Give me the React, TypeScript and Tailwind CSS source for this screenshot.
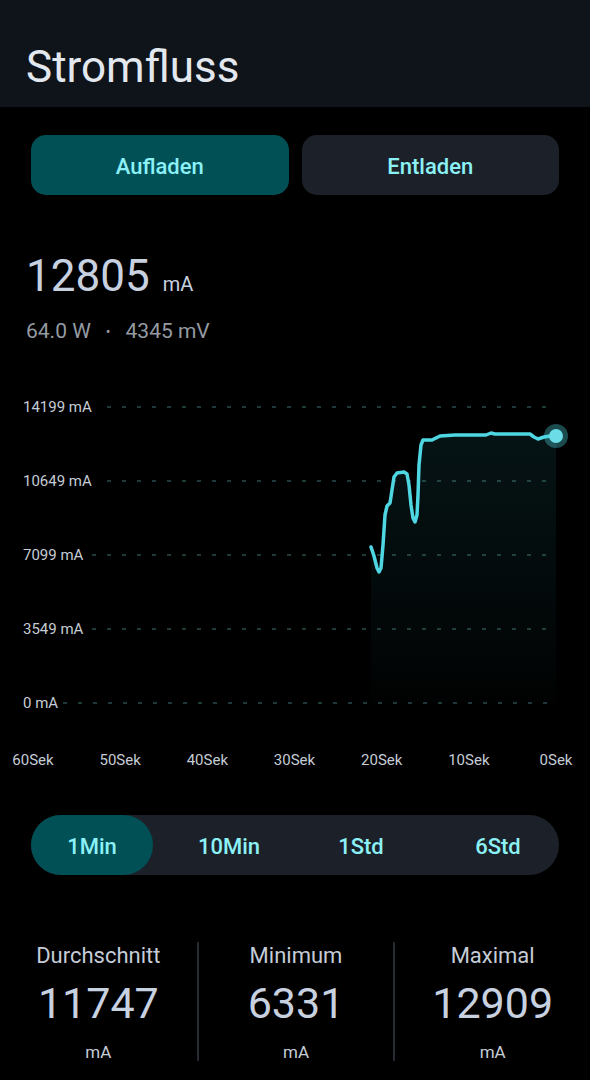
import React from "react";

const font = { fontFamily: "Roboto, 'Noto Sans', sans-serif" };

const yTicks = [
  { label: "14199 mA", y: 407, x0: 107 },
  { label: "10649 mA", y: 481, x0: 107 },
  { label: "7099 mA", y: 555, x0: 92 },
  { label: "3549 mA", y: 629, x0: 92 },
  { label: "0 mA", y: 703, x0: 63 },
];

const xTicks = ["60Sek", "50Sek", "40Sek", "30Sek", "20Sek", "10Sek", "0Sek"];

// samples of the last ~21 seconds, in page coordinates
const points: [number, number][] = [
  [371, 547], [374, 556], [377, 568], [379, 572], [381, 568], [383, 545], [385, 515],
  [387, 506], [390, 503], [392, 490], [394, 477], [397, 473], [404, 472], [407, 474],
  [409, 485], [411, 505], [413, 518], [415, 522], [417, 515], [418, 495], [419, 465],
  [421, 445], [423, 440], [432, 440], [436, 438], [440, 436], [455, 435], [486, 435],
  [491, 433], [495, 434], [530, 434], [534, 437], [538, 439], [544, 437], [550, 436],
  [556, 436],
];

function Chart() {
  const line = points.map((p) => p.join(",")).join(" ");
  const area = `M371,703 L${points.map((p) => p.join(",")).join(" L")} L556,703 Z`;
  return (
    <svg className="block" width={590} height={400} viewBox="0 380 590 400">
      <defs>
        <linearGradient id="fill" x1="0" y1="0" x2="0" y2="1">
          <stop offset="0%" stopColor="#3cc8d7" stopOpacity={0.1} />
          <stop offset="100%" stopColor="#3cc8d7" stopOpacity={0.01} />
        </linearGradient>
      </defs>
      {yTicks.map((t) => (
        <g key={t.label}>
          <text x={23} y={t.y + 5} fontSize={15} fill="#c5ccd6" style={font}>
            {t.label}
          </text>
          <line x1={t.x0} y1={t.y} x2={548} y2={t.y} stroke="#1f3839" strokeWidth={2} strokeDasharray="4 11" />
        </g>
      ))}
      <path d={area} fill="url(#fill)" />
      <polyline points={line} fill="none" stroke="#4fd6e3" strokeWidth={3.5} strokeLinejoin="round" strokeLinecap="round" />
      <circle cx={556} cy={436} r={12} fill="#4fd6e3" opacity={0.35} />
      <circle cx={556} cy={436} r={7} fill="#6cdde6" />
      {xTicks.map((l, i) => (
        <text key={l} x={33 + i * 87.17} y={765} fontSize={15} fill="#c5ccd6" textAnchor="middle" style={font}>
          {l}
        </text>
      ))}
    </svg>
  );
}

function Stat({ label, value, divider }: { label: string; value: string; divider?: boolean }) {
  return (
    <div className={`flex flex-col items-center pt-[3px] ${divider ? "border-l-2 border-[#262b33]" : ""}`}>
      <div className="text-[22px] leading-none text-[#c5ccd8]">{label}</div>
      <div className="mt-[15px] text-[43px] leading-none text-[#c8d1e0]">{value}</div>
      <div className="mt-[19px] text-[17px] leading-none text-[#c5ccd8]">mA</div>
    </div>
  );
}

export default function App() {
  const [mode, setMode] = React.useState("Aufladen");
  const [range, setRange] = React.useState("1Min");

  return (
    <div className="w-[590px] h-[1080px] bg-black overflow-hidden" style={font}>
      <div className="h-[107px] bg-[#0f141b] flex items-end px-[26px] pb-[18px]">
        <h1 className="text-[44px] leading-none text-[#e3e8ef]">Stromfluss</h1>
      </div>

      <div className="mt-[28px] px-[31px] flex gap-[13px]">
        {["Aufladen", "Entladen"].map((m) => (
          <button
            key={m}
            onClick={() => setMode(m)}
            className={`flex-1 h-[60px] pt-[3px] rounded-[15px] text-[22px] font-medium text-[#8cf1f6] ${
              mode === m ? "bg-[#005056]" : "bg-[#1c2129]"
            }`}
          >
            {m}
          </button>
        ))}
      </div>

      <div className="mt-[59px] px-[26px] flex items-baseline gap-[13px] text-[#c8d1e0]">
        <span className="text-[44px] leading-none">12805</span>
        <span className="text-[20px] leading-none">mA</span>
      </div>
      <div className="mt-[23px] px-[26px] flex items-center gap-[15px] text-[21px] leading-none text-[#959ba3]">
        <span>64.0 W</span>
        <span className="text-[14px]">•</span>
        <span>4345 mV</span>
      </div>

      <div className="mt-[38px]">
        <Chart />
      </div>

      <div className="mt-[35px] mx-[31px] h-[60px] rounded-full bg-[#1c2129] grid grid-cols-4">
        {["1Min", "10Min", "1Std", "6Std"].map((r, i) => (
          <button
            key={r}
            onClick={() => setRange(r)}
            className={`rounded-full pt-[3px] text-[22px] font-medium text-[#8cf1f6] ${
              range === r ? "bg-[#005056] w-[122px]" : ""
            } ${i === 3 ? "pl-[10px]" : ""}`}
          >
            {r}
          </button>
        ))}
      </div>

      <div className="mt-[67px] grid grid-cols-3 h-[118px]">
        <Stat label="Durchschnitt" value="11747" />
        <Stat label="Minimum" value="6331" divider />
        <Stat label="Maximal" value="12909" divider />
      </div>
    </div>
  );
}
